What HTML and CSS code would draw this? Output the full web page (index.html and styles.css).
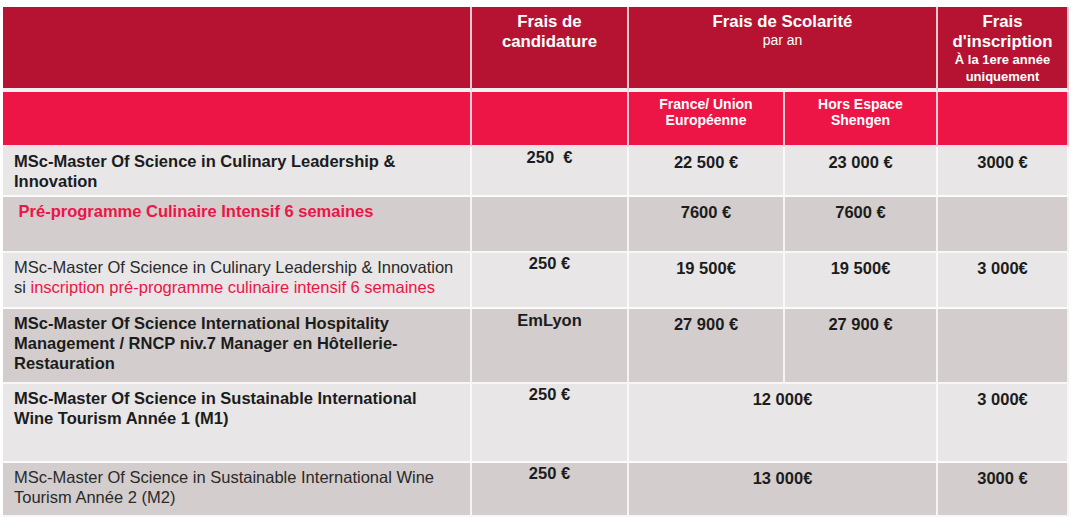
FILE: index.html
```html
<!DOCTYPE html>
<html lang="fr">
<head>
<meta charset="utf-8">
<title>Frais de scolarité</title>
<link rel="stylesheet" href="styles.css">
</head>
<body>
<div class="page">
  <div class="fees" role="table">
    <div class="cell h1"></div>
    <div class="cell h1 center"><div class="ht">Frais de<br>candidature</div></div>
    <div class="cell h1 center span2"><div class="ht">Frais de Scolarité</div><div class="hsub">par an</div></div>
    <div class="cell h1 center"><div class="ht">Frais<br>d'inscription</div><div class="hsub2">À la 1ere année<br>uniquement</div></div>

    <div class="cell h2"></div>
    <div class="cell h2"></div>
    <div class="cell h2 center"><div class="st">France/ Union<br>Européenne</div></div>
    <div class="cell h2 center"><div class="st">Hors Espace<br>Shengen</div></div>
    <div class="cell h2"></div>

    <div class="cell light label bold">MSc-Master Of Science in Culinary Leadership &amp;<br>Innovation</div>
    <div class="cell light num top0 pre">250  €</div>
    <div class="cell light num">22 500 €</div>
    <div class="cell light num">23 000 €</div>
    <div class="cell light num">3000 €</div>

    <div class="cell dark label bold pink">&nbsp;Pré-programme Culinaire Intensif 6 semaines</div>
    <div class="cell dark num"></div>
    <div class="cell dark num">7600 €</div>
    <div class="cell dark num">7600 €</div>
    <div class="cell dark num"></div>

    <div class="cell light label">MSc-Master Of Science in Culinary Leadership &amp; Innovation<br>si <span class="pink">inscription pré-programme culinaire intensif 6 semaines</span></div>
    <div class="cell light num top0">250 €</div>
    <div class="cell light num">19 500€</div>
    <div class="cell light num">19 500€</div>
    <div class="cell light num">3 000€</div>

    <div class="cell dark label bold">MSc-Master Of Science International Hospitality<br>Management / RNCP niv.7 Manager en Hôtellerie-<br>Restauration</div>
    <div class="cell dark num top1">EmLyon</div>
    <div class="cell dark num">27 900 €</div>
    <div class="cell dark num">27 900 €</div>
    <div class="cell dark num"></div>

    <div class="cell light label bold">MSc-Master Of Science in Sustainable International<br>Wine Tourism Année 1 (M1)</div>
    <div class="cell light num top0">250 €</div>
    <div class="cell light num span2">12 000€</div>
    <div class="cell light num">3 000€</div>

    <div class="cell dark label">MSc-Master Of Science in Sustainable International Wine<br>Tourism Année 2 (M2)</div>
    <div class="cell dark num top0">250 €</div>
    <div class="cell dark num span2">13 000€</div>
    <div class="cell dark num">3000 €</div>
  </div>
</div>
</body>
</html>
```

FILE: styles.css
```css
* { box-sizing: border-box; }

html, body {
  margin: 0;
  padding: 0;
  background: #ffffff;
}

body {
  font-family: "Liberation Sans", Arial, sans-serif;
  color: #1c1c1c;
}

.page {
  padding: 7px 0 0 3px;
}

.fees {
  display: grid;
  grid-template-columns: 469px 157px 156px 153px 131px;
  grid-template-rows: 85px 55px 50px 56px 56px 75px 79px 54px;
  width: 1066px;
}

.cell {
  border-right: 2px solid rgba(255, 255, 255, 0.78);
  border-bottom: 2px solid rgba(255, 255, 255, 0.85);
  font-size: 16.5px;
  line-height: 20px;
}

.span2 { grid-column: span 2; }
.center { text-align: center; }

.h1 {
  background: #b51331;
  color: #ffffff;
  border-bottom: 4px solid #f4f0f1;
  padding-top: 5px;
}

.ht {
  font-weight: 700;
  font-size: 16.8px;
  line-height: 20px;
}

.hsub {
  font-size: 14px;
  line-height: 16px;
}

.hsub2 {
  font-weight: 700;
  font-size: 13px;
  line-height: 16.5px;
}

.h2 {
  background: #ec1545;
  color: #ffffff;
  padding-top: 4px;
}

.st {
  font-weight: 700;
  font-size: 14px;
  line-height: 16px;
}

.light { background: #e8e6e7; }
.dark { background: #d3cdcd; }

.label {
  padding: 4px 0 0 11px;
  color: #2a2a2a;
  white-space: nowrap;
}

.bold { font-weight: 700; color: #1c1c1c; }

.pink { color: #ec1545; }

.num {
  text-align: center;
  font-weight: 700;
  padding-top: 5px;
}

.top0 { padding-top: 0; }
.top1 { padding-top: 1px; }

.pre { white-space: pre; }
```
